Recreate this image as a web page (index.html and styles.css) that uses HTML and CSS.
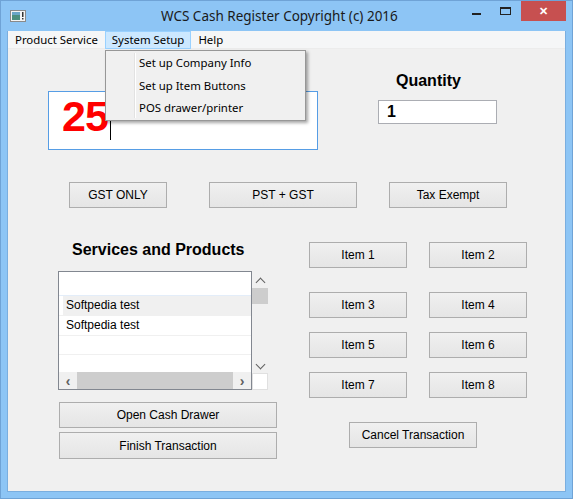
FILE: index.html
```html
<!DOCTYPE html>
<html>
<head>
<meta charset="utf-8">
<link rel="stylesheet" href="styles.css">
</head>
<body>
<div class="window">
  <div class="titlebar">
    <svg class="appicon" width="16" height="12" viewBox="0 0 16 12">
      <rect x="0.5" y="0.5" width="15" height="11" fill="#f4f4f4" stroke="#8a8a8a"/>
      <rect x="2" y="2" width="8" height="8" fill="#4c8f80"/>
      <rect x="2" y="2" width="8" height="3" fill="#6aa6c8"/>
      <rect x="12" y="2" width="1.5" height="5" fill="#333"/>
      <rect x="12" y="8" width="1.5" height="1.5" fill="#333"/>
    </svg>
    <div class="title">WCS Cash Register Copyright (c) 2016</div>
    <div class="controls">
      <span class="minbtn"><span class="minglyph"></span></span>
      <span class="maxbtn"><span class="maxglyph"></span></span>
      <span class="closebtn">&#x2715;</span>
    </div>
  </div>
  <div class="inner">
    <div class="menubar">
      <span class="menuitem">Product Service</span>
      <span class="menuitem active">System Setup</span>
      <span class="menuitem">Help</span>
      <div class="dropdown">
        <div class="dditem">Set up Company Info</div>
        <div class="dditem">Set up Item Buttons</div>
        <div class="dditem">POS drawer/printer</div>
      </div>
    </div>
    <div class="client">
      <div class="row-a">
        <div class="bigbox"><span class="bignum">25</span><span class="caret"></span></div>
        <div class="qty">
          <div class="qtylabel">Quantity</div>
          <div class="qtybox">1</div>
        </div>
      </div>
      <div class="row-b">
        <div class="btn btn-gst">GST ONLY</div>
        <div class="btn btn-pst">PST + GST</div>
        <div class="btn btn-tax">Tax Exempt</div>
      </div>
      <div class="row-c">
        <div class="leftcol">
          <div class="sectitle">Services and Products</div>
          <div class="listwrap">
            <div class="listbox">
              <div class="lrow lrow-head"></div>
              <div class="lrow lrow-sel"><span class="lhdr"></span>Softpedia test</div>
              <div class="lrow">Softpedia test</div>
              <div class="lrow lrow-empty"></div>
              <div class="lfill"></div>
              <div class="hscroll">
                <span class="arr">&#x2039;</span>
                <span class="hthumb"></span>
                <span class="arr">&#x203A;</span>
              </div>
            </div>
            <div class="vscroll">
              <span class="varr up"></span>
              <span class="vthumb"></span>
              <span class="vspace"></span>
              <span class="varr down"></span>
              <span class="corner"></span>
            </div>
          </div>
          <div class="btn btn-wide">Open Cash Drawer</div>
          <div class="btn btn-wide btn-finish">Finish Transaction</div>
        </div>
        <div class="rightcol">
          <div class="items">
            <div class="btn btn-item">Item 1</div>
            <div class="btn btn-item">Item 2</div>
            <div class="btn btn-item r2">Item 3</div>
            <div class="btn btn-item r2">Item 4</div>
            <div class="btn btn-item r3">Item 5</div>
            <div class="btn btn-item r3">Item 6</div>
            <div class="btn btn-item r3">Item 7</div>
            <div class="btn btn-item r3">Item 8</div>
          </div>
          <div class="btn btn-cancel">Cancel Transaction</div>
        </div>
      </div>
    </div>
  </div>
</div>
</body>
</html>
```
FILE: styles.css
```css
* { box-sizing: border-box; }
html, body { margin: 0; padding: 0; }
body {
  width: 573px;
  height: 499px;
  overflow: hidden;
  background: #8cc4f4;
  font-family: "Liberation Sans", Arial, sans-serif;
}
.window {
  width: 573px;
  height: 499px;
  background: #8dc5f5;
  display: flex;
  flex-direction: column;
  border: 1px solid #6fa3d6;
}
.titlebar {
  height: 30px;
  display: flex;
  align-items: flex-start;
  position: relative;
}
.appicon { margin: 9px 0 0 9px; flex-shrink: 0; }
.title {
  flex: 1;
  text-align: left;
  font-family: "Noto Sans", "Open Sans", sans-serif;
  font-size: 13.5px;
  color: #1a1a1a;
  padding-top: 6px;
  padding-left: 135px;
  white-space: nowrap;
}
.controls { display: flex; align-items: flex-start; }
.minbtn { width: 26px; height: 20px; display: flex; justify-content: center; }
.minglyph { width: 9px; height: 2px; background: #222; margin-top: 12px; margin-left: -6px; }
.maxbtn { width: 26px; height: 20px; display: flex; justify-content: center; }
.maxglyph { width: 11px; height: 8px; border: 1px solid #222; border-top-width: 2px; margin-top: 6px; }
.closebtn {
  width: 45px; height: 20px;
  background: #c75050;
  color: #fff;
  font-size: 11px;
  font-weight: bold;
  display: flex; align-items: center; justify-content: center;
  margin-right: 6px;
  margin-left: 3px;
}
.inner {
  flex: 1;
  margin: 0 6px 6px 6px;
  display: flex;
  flex-direction: column;
  border: 1px solid #7aaedf;
  border-top: none;
}
.menubar {
  height: 18px;
  background: #f5f6f7;
  display: flex;
  position: relative;
  font-family: "Noto Sans", "Open Sans", sans-serif;
  font-size: 11.4px;
  border-bottom: 1px solid #ececec;
}
.menuitem {
  padding: 0 6px;
  line-height: 16px;
  height: 18px;
  border: 1px solid transparent;
  color: #000;
}
.menuitem.active { background: #cce8ff; border-color: #99d1ff; }
.dropdown {
  position: absolute;
  left: 97px;
  top: 19px;
  width: 201px;
  height: 71px;
  background: #f0f0f0;
  border: 1px solid #979797;
  box-shadow: 2px 2px 3px rgba(0,0,0,0.35);
  padding-top: 1px;
  z-index: 5;
}
.dropdown::before {
  content: "";
  position: absolute;
  left: 28px; top: 2px; bottom: 2px;
  width: 1px;
  background: #e2e2e2;
  border-right: 1px solid #fff;
}
.dditem {
  height: 22.5px;
  line-height: 22px;
  padding-left: 33px;
  color: #000;
}
.client {
  flex: 1;
  background: #f0f0f0;
  position: relative;
}
.row-a {
  display: flex;
  align-items: flex-start;
  padding-top: 23px;
}
.bigbox {
  margin-left: 40px;
  margin-top: 19px;
  width: 270px;
  height: 59px;
  background: #fff;
  border: 1px solid #569de5;
  display: flex;
  align-items: flex-start;
  padding-left: 13px;
}
.bignum {
  color: #ff0000;
  font-weight: bold;
  font-size: 43px;
  line-height: 43px;
  margin-top: 3px;
  letter-spacing: -1px;
}
.caret { width: 1px; height: 39px; background: #000; margin-top: 9px; margin-left: 2px; }
.qty { margin-left: 60px; display: flex; flex-direction: column; }
.qtylabel {
  font-weight: bold;
  font-size: 16px;
  line-height: 18px;
  margin-left: 18px;
  color: #000;
}
.qtybox {
  margin-top: 10px;
  width: 119px;
  height: 24px;
  background: #fff;
  border: 1px solid #abadb3;
  font-weight: bold;
  font-size: 16px;
  line-height: 22px;
  padding-left: 8px;
  color: #000;
}
.btn {
  height: 26px;
  border: 1px solid #adadad;
  background: linear-gradient(#f0f0f0, #e5e5e5);
  font-size: 12px;
  color: #000;
  display: flex;
  align-items: center;
  justify-content: center;
}
.row-b {
  display: flex;
  margin-top: 32px;
  padding-left: 61px;
}
.btn-gst { width: 98px; }
.btn-pst { width: 148px; margin-left: 42px; }
.btn-tax { width: 118px; margin-left: 32px; }
.row-c {
  display: flex;
  align-items: flex-start;
  margin-top: 32px;
}
.leftcol {
  margin-left: 50px;
  width: 219px;
  display: flex;
  flex-direction: column;
}
.sectitle {
  font-weight: bold;
  font-size: 16px;
  line-height: 19px;
  padding-left: 14px;
  color: #000;
}
.listwrap {
  display: flex;
  margin-top: 12px;
}
.listbox {
  width: 194px;
  height: 119px;
  background: #fff;
  border: 1px solid #828790;
  display: flex;
  flex-direction: column;
}
.lrow {
  height: 20px;
  line-height: 19px;
  font-size: 12px;
  padding-left: 7px;
  border-bottom: 1px solid #f0f0f0;
  color: #000;
  display: flex;
  flex-shrink: 0;
}
.lrow-head { height: 24px; border-bottom: 1px solid #e3edf9; }
.lrow-sel { background: #f0f0f0; position: relative; padding-left: 7px; }
.lhdr { position: absolute; left: 0; top: 0; bottom: 0; width: 4px; background: #fff; }
.lrow-empty { height: 19px; }
.lfill { flex: 1; }
.hscroll {
  height: 17px;
  flex-shrink: 0;
  background: #f0f0f0;
  display: flex;
  align-items: center;
  color: #606060;
  font-size: 14px;
}
.arr { width: 18px; text-align: center; line-height: 14px; font-weight: bold; }
.hthumb { flex: 1; height: 17px; background: #cdcdcd; }
.vscroll {
  width: 16px;
  height: 119px;
  display: flex;
  flex-direction: column;
  align-items: center;
}
.varr {
  width: 7px; height: 7px;
  border-left: 1.5px solid #606060;
  border-top: 1.5px solid #606060;
  flex-shrink: 0;
}
.varr.up { transform: rotate(45deg); margin-top: 8px; }
.varr.down { transform: rotate(225deg); margin-top: 0; margin-bottom: 5px; }
.vthumb { width: 16px; height: 16px; background: #cdcdcd; margin-top: 2px; flex-shrink: 0; }
.vspace { flex: 1; }
.corner { width: 16px; height: 17px; background: #fff; border: 1px solid #e0e0e0; flex-shrink: 0; }
.btn-wide { width: 218px; margin-left: 1px; margin-top: 12px; }
.btn-finish { margin-top: 4px; height: 27px; }
.rightcol {
  margin-left: 32px;
  margin-top: 2px;
  display: flex;
  flex-direction: column;
}
.items {
  display: grid;
  grid-template-columns: 98px 98px;
  column-gap: 22px;
  row-gap: 14px;
}
.items .r2 { margin-top: 10px; }
.btn-cancel { width: 128px; margin-left: 40px; margin-top: 24px; }
```
